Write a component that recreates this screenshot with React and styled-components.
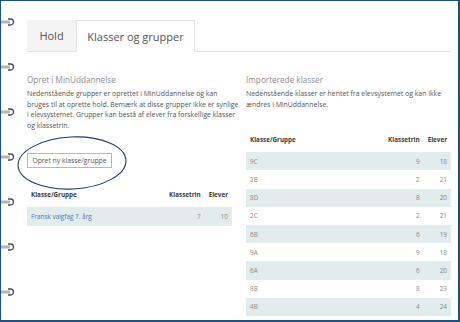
import React from 'react'
import styled, { createGlobalStyle, css } from 'styled-components'

const GlobalStyle = createGlobalStyle`
  html, body {
    margin: 0;
    padding: 0;
    background: #fff;
  }
  body {
    font-family: "Open Sans", "Liberation Sans", sans-serif;
  }
`

const Frame = styled.div`
  width: 460px;
  height: 322px;
  box-sizing: border-box;
  border-style: solid;
  border-color: #1c4f80;
  border-width: 1px 2px 2px 1px;
  display: flex;
  overflow: hidden;
  position: relative;
`

const RingStrip = styled.div`
  width: 26px;
  flex: none;
  display: flex;
  flex-direction: column;
  gap: 37px;
  padding-top: 17px;
`

const Page = styled.div`
  width: 424px;
  padding-top: 19px;
  position: relative;
`

const TabBar = styled.div`
  display: flex;
  height: 32px;
`

const Tab = styled.div`
  box-sizing: border-box;
  height: 32px;
  display: flex;
  align-items: center;
  justify-content: center;
  font-size: 11px;
  color: #555;
  ${props => props.active
  ? css`
    width: 119px;
    background: #fff;
    border: 1px solid #e4e4e4;
    border-bottom: none;
  `
  : css`
    width: 49px;
    background: #f4f4f4;
    border-bottom: 1px solid #e4e4e4;
  `}
`

const TabFill = styled.div`
  flex: 1;
  border-bottom: 1px solid #e4e4e4;
`

const Columns = styled.div`
  display: grid;
  grid-template-columns: 205px 205px;
  column-gap: 14px;
  margin-top: 22px;
`

const Column = styled.div`
  position: relative;
  display: flex;
  flex-direction: column;
`

const Heading = styled.div`
  font-size: 8.2px;
  line-height: 12px;
  color: #8e8e8e;
  font-weight: 400;
`

const Text = styled.p`
  margin: 3px 0 0;
  font-size: 6.9px;
  line-height: 10.6px;
  color: #555;
  white-space: nowrap;
`

const Button = styled.button`
  align-self: flex-start;
  margin-top: 22px;
  width: 85px;
  height: 15px;
  padding: 0;
  box-sizing: border-box;
  border: 1px solid #b8b8b8;
  background: #fff;
  font-family: inherit;
  font-size: 6.8px;
  color: #555;
`

const Table = styled.table`
  width: 100%;
  border-collapse: collapse;
  margin-top: ${props => props.top}px;
  font-size: 6.4px;

  th {
    font-weight: 700;
    font-size: 6.3px;
    color: #3a3a3a;
    text-align: left;
    height: 19px;
    padding: 0 4px 3px;
    vertical-align: middle;
  }
  td {
    height: 18.2px;
    padding: 0 4px;
    color: #888;
  }
  th.num, td.num {
    text-align: right;
    width: 1%;
    white-space: nowrap;
  }
  tbody tr:nth-child(odd) td {
    background: #e2eced;
  }
`

const Link = styled.a`
  color: #3d7cb8;
  text-decoration: none;
`

const Circle = styled.svg`
  position: absolute;
  left: -12px;
  top: 59px;
  pointer-events: none;
`

const Ring = () => (
  <svg width="14" height="8" viewBox="0 0 14 8">
    <rect x="0" y="2.5" width="9" height="3" fill="#b4b4b4" />
    <path d="M7 1 H9.5 A3 3 0 0 1 9.5 7 H7" fill="none" stroke="#4a4a4a" strokeWidth="1.3" />
  </svg>
)

const imported = [
  ['9C', 9, 18],
  ['2B', 2, 21],
  ['8D', 8, 20],
  ['2C', 2, 21],
  ['6B', 6, 19],
  ['9A', 9, 18],
  ['6A', 6, 20],
  ['8B', 8, 23],
  ['4B', 4, 24]
]

const App = () => (
  <>
    <GlobalStyle />
    <Frame>
      <RingStrip>
        {[0, 1, 2, 3, 4, 5, 6].map(i => <Ring key={i} />)}
      </RingStrip>
      <Page>
        <TabBar>
          <Tab>Hold</Tab>
          <Tab active>Klasser og grupper</Tab>
          <TabFill />
        </TabBar>
        <Columns>
          <Column>
            <Heading>Opret i MinUddannelse</Heading>
            <Text>
              Nedenstående grupper er oprettet i MinUddannelse og kan<br />
              bruges til at oprette hold. Bemærk at disse grupper ikke er synlige<br />
              i elevsystemet. Grupper kan bestå af elever fra forskellige klasser<br />
              og klassetrin.
            </Text>
            <Button>Opret ny klasse/gruppe</Button>
            <Table top={17}>
              <thead>
                <tr>
                  <th>Klasse/Gruppe</th>
                  <th className="num">Klassetrin</th>
                  <th className="num">Elever</th>
                </tr>
              </thead>
              <tbody>
                <tr>
                  <td><Link href="#">Fransk valgfag 7. årg</Link></td>
                  <td className="num">7</td>
                  <td className="num">10</td>
                </tr>
              </tbody>
            </Table>
            {/* hand-drawn highlight round the button */}
            <Circle width="115" height="60" viewBox="0 0 115 60">
              <ellipse cx="57" cy="30" rx="54" ry="26" fill="none" stroke="#1f3a6c" strokeWidth="1.1" transform="rotate(-3 57 30)" />
            </Circle>
          </Column>
          <Column>
            <Heading>Importerede klasser</Heading>
            <Text>
              Nedenstående klasser er hentet fra elevsystemet og kan ikke<br />
              ændres i MinUddannelse.
            </Text>
            <Table top={20}>
              <thead>
                <tr>
                  <th>Klasse/Gruppe</th>
                  <th className="num">Klassetrin</th>
                  <th className="num">Elever</th>
                </tr>
              </thead>
              <tbody>
                {imported.map(([name, grade, count]) => (
                  <tr key={name}>
                    <td>{name}</td>
                    <td className="num">{grade}</td>
                    <td className="num">{count}</td>
                  </tr>
                ))}
              </tbody>
            </Table>
          </Column>
        </Columns>
      </Page>
    </Frame>
  </>
)

export default App
